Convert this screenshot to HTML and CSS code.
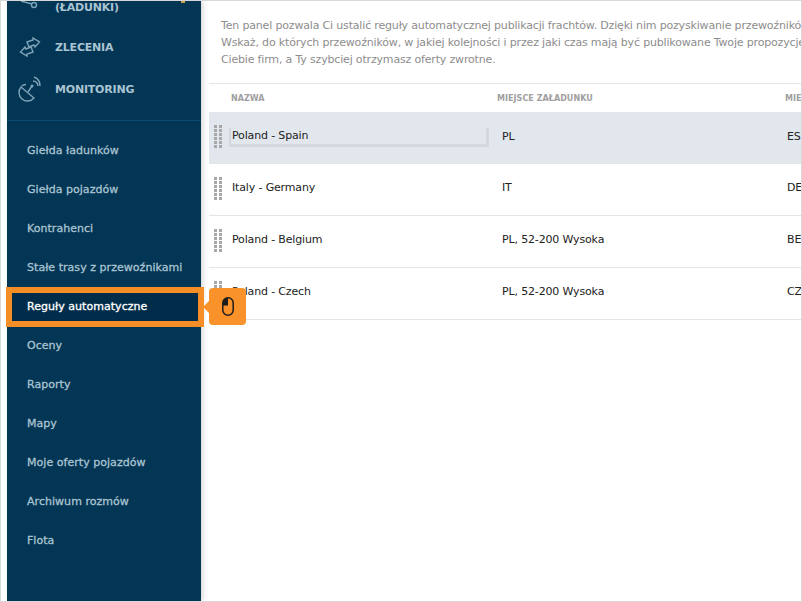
FILE: index.html
```html
<!DOCTYPE html>
<html lang="pl">
<head>
<meta charset="utf-8">
<title>Reguły automatyczne</title>
<link rel="stylesheet" href="styles.css">
</head>
<body>
<div class="frame">
  <aside class="sidebar">
    <nav class="primary">
      <a class="primary-item first">
        <svg class="nav-icon" viewBox="0 0 32 32"><path d="M3 7 L14 10"/><circle cx="16" cy="11" r="2.5"/></svg>
        <span>(ŁADUNKI)</span>
        <i class="badge"></i>
      </a>
      <a class="primary-item">
        <svg class="nav-icon" viewBox="0 0 32 32"><path d="M9 11 L15 9 L15 7 L21.5 11 L17 16 L16 14 L11 16 Z"/><path d="M15 21 L9 23 L9 25 L2.5 21 L7 16 L8 18 L13 16 Z"/></svg>
        <span>ZLECENIA</span>
      </a>
      <a class="primary-item">
        <svg class="nav-icon" viewBox="0 0 32 32"><path d="M3 14 A8.5 8.5 0 0 0 16 25 Z"/><path d="M3.5 13 A8.5 8.5 0 0 1 8 11.5"/><path d="M10 19 L14 13 M15 8 a5 5 0 0 1 5 5 M16 4 a9.5 9.5 0 0 1 6 9"/><circle class="dot" cx="14" cy="13" r="1.5"/></svg>
        <span>MONITORING</span>
      </a>
    </nav>
    <ul class="secondary">
      <li>Giełda ładunków</li>
      <li>Giełda pojazdów</li>
      <li>Kontrahenci</li>
      <li>Stałe trasy z przewoźnikami</li>
      <li class="active">Reguły automatyczne</li>
      <li>Oceny</li>
      <li>Raporty</li>
      <li>Mapy</li>
      <li>Moje oferty pojazdów</li>
      <li>Archiwum rozmów</li>
      <li>Flota</li>
    </ul>
  </aside>
  <main class="content">
    <p class="intro">Ten panel pozwala Ci ustalić reguły automatycznej publikacji frachtów. Dzięki nim pozyskiwanie przewoźników<br>Wskaż, do których przewoźników, w jakiej kolejności i przez jaki czas mają być publikowane Twoje propozycje<br>Ciebie firm, a Ty szybciej otrzymasz oferty zwrotne.</p>
    <div class="table">
      <div class="row head"><span class="col-name">NAZWA</span><span class="col-load">MIEJSCE ZAŁADUNKU</span><span class="col-unload">MIEJSCE</span></div>
      <div class="row selected"><i class="grip"></i><span class="col-name"><span class="edit">Poland - Spain</span></span><span class="col-load">PL</span><span class="col-unload">ES</span></div>
      <div class="row"><i class="grip"></i><span class="col-name">Italy - Germany</span><span class="col-load">IT</span><span class="col-unload">DE</span></div>
      <div class="row"><i class="grip"></i><span class="col-name">Poland - Belgium</span><span class="col-load">PL, 52-200 Wysoka</span><span class="col-unload">BE</span></div>
      <div class="row"><i class="grip"></i><span class="col-name">Poland - Czech</span><span class="col-load">PL, 52-200 Wysoka</span><span class="col-unload">CZ</span></div>
    </div>
  </main>
  <div class="highlight"></div>
  <div class="callout">
    <svg viewBox="0 0 12 19" class="mouse"><path class="fill" d="M6 .8 A5.2 5.2 0 0 0 .8 6 V8.5 H6 Z"/><rect x=".8" y=".8" width="10.4" height="17.4" rx="5.2"/></svg>
  </div>
</div>
</body>
</html>
```
FILE: styles.css
```css
* { box-sizing: border-box; }
html, body { margin: 0; height: 100%; background: #fff; }
body { font-family: "DejaVu Sans", sans-serif; font-size: 11px; }
.frame {
  position: relative;
  width: 802px;
  height: 602px;
  border: 1px solid #d8d8d8;
  display: flex;
  overflow: hidden;
  padding-left: 6px;
  background: #fff;
}
.sidebar {
  width: 194px;
  flex: none;
  background: #033554;
  box-shadow: 2px 0 5px rgba(0,0,0,.16);
  color: #a9c4d2;
}
.primary { border-bottom: 1px solid #0b4a70; height: 120px; }
.primary-item { position: relative; display: flex; align-items: center; height: 42px; padding-left: 11px; font-weight: bold; gap: 5px; letter-spacing: -.2px; }
.primary-item.first { height: 25px; align-items: flex-end; padding-bottom: 12px; overflow: hidden; }
.nav-icon { width: 32px; height: 32px; flex: none; fill: none; stroke: #7fa3b8; stroke-width: 1.4; }
.nav-icon .dot { fill: #7fa3b8; stroke: none; }
.first .nav-icon { margin-bottom: -12px; }
.badge { position: absolute; left: 174px; top: 0; width: 4px; height: 2px; background: #c9a24a; }
.secondary { list-style: none; margin: 0; padding: 10px 0 0; }
.secondary li { height: 39px; line-height: 39px; padding-left: 20px; white-space: nowrap; -webkit-text-stroke: .3px currentColor; letter-spacing: .04px; }
.secondary li.active { color: #fff; background: #022d4a; }
.content { flex: 1; min-width: 0; padding-left: 8px; overflow: hidden; color: #222; }
.intro { margin: 0; height: 82px; padding: 16px 0 0 12px; color: #8d8d8d; font-size: 11px; line-height: 17px; white-space: nowrap; letter-spacing: -.17px; }
.table { border-top: 1px solid #e4e4e4; }
.row { display: flex; align-items: center; height: 52px; padding-bottom: 5px; position: relative; border-bottom: 1px solid #e4e4e4; white-space: nowrap; letter-spacing: -.15px; }
.row.head { height: 28px; padding-bottom: 0; border-bottom: 0; font-size: 8px; font-weight: bold; color: #a0a0a0; letter-spacing: .05px; }
.row.selected { background: #e1e7ed; padding-bottom: 2px; }
.col-name { width: 265px; margin-left: 23px; flex: none; }
.col-load { width: 285px; margin-left: 5px; flex: none; }
.head .col-name { margin-left: 22px; width: 266px; }
.head .col-load { margin-left: 0; width: 288px; }
.edit { display: block; width: 260px; margin-left: -3px; margin-top: 2px; padding-left: 1px; height: 19px; line-height: 16px; border: 3px solid #d4d8dc; border-top: 0; border-left-width: 2px; }
.grip { position: absolute; left: 5px; top: 13px; width: 8px; height: 24px; background: conic-gradient(from 90deg at 3px 3px, transparent 50%, #a8a8a8 0 75%, transparent 0) 0 0 / 5px 4px; }
.highlight { position: absolute; left: 5px; top: 286px; width: 198px; height: 40px; border: 6px solid #f68e28; }
.callout { position: absolute; left: 208px; top: 287px; width: 37px; height: 37px; background: #f9922b; border-radius: 4px; display: flex; align-items: center; justify-content: center; }
.callout::before { content: ""; position: absolute; left: -6px; top: 13px; border: 6px solid transparent; border-left: 0; border-right-color: #f9922b; }
.mouse { width: 12px; height: 19px; fill: none; stroke: #1c1c1c; stroke-width: 1.5; }
.mouse .fill { fill: #1c1c1c; stroke: none; }
```
